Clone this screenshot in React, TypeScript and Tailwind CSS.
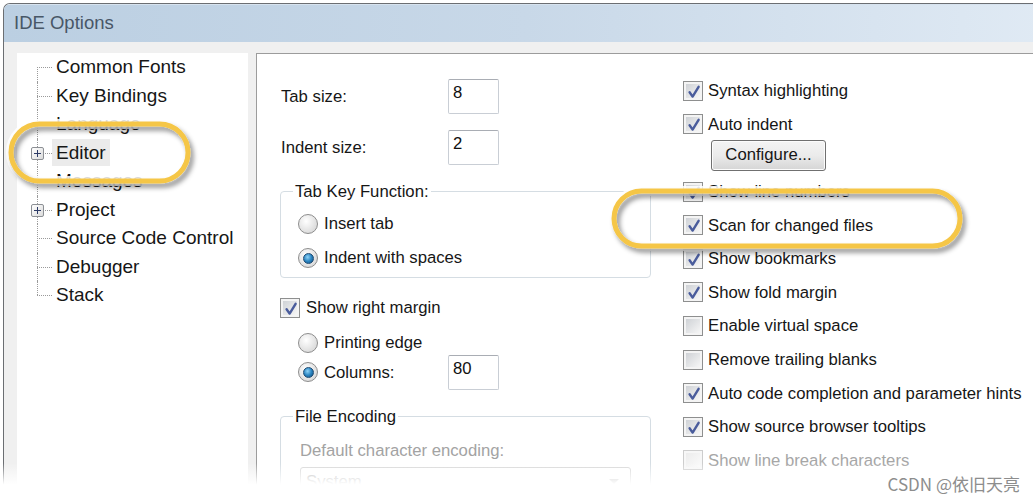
import React from "react";

const CheckMark = () => (
  <svg viewBox="0 0 20 20" className="absolute inset-0 w-[20px] h-[20px]">
    <path d="M5.6 10.2 L8.6 14.6 L14.6 4.8" fill="none" stroke="#4a5c9c" strokeWidth="2.4" strokeLinecap="round" strokeLinejoin="round" />
  </svg>
);

function Check({ checked, disabled }: { checked?: boolean; disabled?: boolean }) {
  return (
    <span
      className={
        disabled
          ? "relative w-[20px] h-[20px] shrink-0 border border-[#cdcdcd] bg-[#f7f7f7] p-[2px]"
          : "relative w-[20px] h-[20px] shrink-0 border border-[#8e8f8f] bg-[#f4f4f4] p-[2px]"
      }
    >
      <span
        className={
          disabled
            ? "block w-full h-full bg-linear-to-br from-[#ececec] to-[#fafafa]"
            : "block w-full h-full bg-linear-to-br from-[#cfd2d6] to-[#f6f6f6]"
        }
      />
      {checked && <CheckMark />}
    </span>
  );
}

function Radio({ selected }: { selected?: boolean }) {
  return (
    <span className="w-[20px] h-[20px] shrink-0 rounded-full border border-[#8d8d8d] bg-radial-[at_40%_35%] from-[#ffffff] to-[#cfcfcf] flex items-center justify-center">
      {selected && (
        <span className="w-[11px] h-[11px] rounded-full border border-[#1d4a72] bg-radial-[at_40%_35%] from-[#8fd3f7] via-[#2c86c2] to-[#0b4a7c]" />
      )}
    </span>
  );
}

function TextBox({ value }: { value: string }) {
  return (
    <div className="w-[51px] h-[35px] shrink-0 bg-white border border-[#c9ced5] border-t-[#a9adb4] rounded-[2px] pl-[4px] pt-[3px] leading-[20px] text-[#111]">
      {value}
    </div>
  );
}

function CheckRow({ label, checked, disabled }: { label: string; checked?: boolean; disabled?: boolean }) {
  return (
    <div className="h-[33.6px] shrink-0 flex items-center gap-[5px]">
      <Check checked={checked} disabled={disabled} />
      <span className={disabled ? "text-[#a6a6a6] whitespace-nowrap" : "whitespace-nowrap"}>{label}</span>
    </div>
  );
}

const treeItems: { label: string; plus?: boolean; selected?: boolean }[] = [
  { label: "Common Fonts" },
  { label: "Key Bindings" },
  { label: "Language" },
  { label: "Editor", plus: true, selected: true },
  { label: "Messages" },
  { label: "Project", plus: true },
  { label: "Source Code Control" },
  { label: "Debugger" },
  { label: "Stack" },
];

function TreeRow({ item, index, count }: { item: (typeof treeItems)[number]; index: number; count: number }) {
  const first = index === 0;
  const last = index === count - 1;
  const vClass = first
    ? "absolute left-[20px] top-1/2 bottom-0 border-l border-dotted border-[#9a9a9a]"
    : last
    ? "absolute left-[20px] top-0 bottom-1/2 border-l border-dotted border-[#9a9a9a]"
    : "absolute left-[20px] top-0 bottom-0 border-l border-dotted border-[#9a9a9a]";
  return (
    <div className="h-[28.5px] shrink-0 flex items-center">
      <div className="relative w-[35px] h-full shrink-0">
        <div className={vClass} />
        <div className="absolute left-[20px] w-[15px] top-1/2 border-t border-dotted border-[#9a9a9a]" />
        {item.plus && (
          <div className="absolute left-[14px] top-[8px] w-[13px] h-[13px] rounded-[2px] border border-[#8c8f94] bg-linear-to-br from-[#ffffff] to-[#dcdcdc] flex items-center justify-center">
            <div className="relative w-[7px] h-[7px]">
              <div className="absolute left-0 right-0 top-[3px] h-[1px] bg-[#2c3a66]" />
              <div className="absolute top-0 bottom-0 left-[3px] w-[1px] bg-[#2c3a66]" />
            </div>
          </div>
        )}
      </div>
      <span
        className={
          item.selected
            ? "h-[27px] flex items-center px-[4px] bg-[#ebebeb] whitespace-nowrap"
            : "h-[27px] flex items-center px-[4px] whitespace-nowrap"
        }
      >
        {item.label}
      </span>
    </div>
  );
}

export default function App() {
  return (
    <div className="relative w-[1033px] h-[499px] overflow-hidden bg-white pt-[3px] pl-[3px] font-['Liberation_Sans','Noto_Sans_CJK_SC',sans-serif]">
      <div className="w-[1045px] h-[496px] flex flex-col border-l border-t border-[#6b6e72] rounded-tl-[7px] overflow-hidden">
        {/* title bar */}
        <div className="h-[38px] shrink-0 bg-linear-to-r from-[#bbcfe2] via-[#c8d8e8] to-[#e0eaf4] flex items-center pl-[10px] border-t border-[#d7e3ef]">
          <span className="text-[18.5px] text-[#485767] leading-none">IDE Options</span>
        </div>
        {/* body */}
        <div className="flex-1 min-h-0 flex bg-[#f0f0f0] pt-[11px] pl-[13px]">
          {/* tree */}
          <div className="w-[231px] shrink-0 bg-white flex flex-col text-[19px] text-[#161616]">
            {treeItems.map((it, i) => (
              <TreeRow key={it.label} item={it} index={i} count={treeItems.length} />
            ))}
          </div>
          {/* right panel */}
          <div className="ml-[8px] flex-1 min-w-0 bg-white border-l border-t border-[#9c9c9c] flex pl-[23px] text-[16.7px] text-[#161616] overflow-hidden">
            {/* left column */}
            <div className="w-[371px] shrink-0 flex flex-col pt-[25px]">
              <div className="h-[35px] shrink-0 flex items-center">
                <span className="w-[168px] shrink-0 pl-[1px]">Tab size:</span>
                <TextBox value="8" />
              </div>
              <div className="h-[35px] shrink-0 mt-[16px] flex items-center">
                <span className="w-[168px] shrink-0 pl-[1px]">Indent size:</span>
                <TextBox value="2" />
              </div>
              <fieldset className="shrink-0 mt-[17px] border border-[#d5dde3] rounded-[4px] px-[17px] pb-[2px] min-w-0">
                <legend className="ml-[-5px] px-[2px] leading-[19px]">Tab Key Function:</legend>
                <div className="pt-[6px] flex flex-col">
                  <div className="h-[34px] shrink-0 flex items-center gap-[6px]">
                    <Radio />
                    <span>Insert tab</span>
                  </div>
                  <div className="h-[34px] shrink-0 flex items-center gap-[6px]">
                    <Radio selected />
                    <span>Indent with spaces</span>
                  </div>
                </div>
              </fieldset>
              <div className="shrink-0 mt-[13px] h-[34px] flex items-center gap-[6px]">
                <Check checked />
                <span>Show right margin</span>
              </div>
              <div className="shrink-0 mt-[3px] h-[30px] pl-[18px] flex items-center gap-[6px]">
                <Radio />
                <span>Printing edge</span>
              </div>
              <div className="shrink-0 mt-[-3px] h-[35px] flex items-center">
                <div className="w-[168px] shrink-0 pl-[18px] flex items-center gap-[6px]">
                  <Radio selected />
                  <span>Columns:</span>
                </div>
                <TextBox value="80" />
              </div>
              <fieldset className="shrink-0 mt-[17px] border border-[#d5dde3] rounded-[4px] px-[19px] min-w-0">
                <legend className="ml-[-7px] px-[2px] leading-[19px]">File Encoding</legend>
                <div className="pt-[10px] h-[40px] flex items-center text-[#a3a3a3]">Default character encoding:</div>
                <div className="mt-[1px] h-[30px] border border-[#d6d6d6] rounded-[3px] flex items-center justify-between px-[5px] text-[#b4b4b4]">
                  <span>System</span>
                  <svg width="10" height="6" viewBox="0 0 10 6" className="mr-[6px]">
                    <path d="M0 0 L10 0 L5 5 Z" fill="#b9b9b9" />
                  </svg>
                </div>
                <div className="h-[20px]" />
              </fieldset>
            </div>
            {/* right column */}
            <div className="ml-[32px] shrink-0 flex flex-col pt-[20px]">
              <CheckRow label="Syntax highlighting" checked />
              <CheckRow label="Auto indent" checked />
              <div className="h-[33.6px] shrink-0 flex items-start">
                <button className="ml-[28px] -mt-[1px] w-[115px] h-[31px] rounded-[3px] border border-[#707070] bg-linear-to-b from-[#f4f4f4] via-[#ebebeb] via-50% to-[#d5d5d5] shadow-[inset_0_0_0_1px_#fcfcfc] text-[#151515] text-[16.7px] leading-none">
                  Configure...
                </button>
              </div>
              <CheckRow label="Show line numbers" checked />
              <CheckRow label="Scan for changed files" checked />
              <CheckRow label="Show bookmarks" checked />
              <CheckRow label="Show fold margin" checked />
              <CheckRow label="Enable virtual space" />
              <CheckRow label="Remove trailing blanks" />
              <CheckRow label="Auto code completion and parameter hints" checked />
              <CheckRow label="Show source browser tooltips" checked />
              <CheckRow label="Show line break characters" disabled />
            </div>
          </div>
        </div>
      </div>

      {/* highlight ellipses */}
      <svg className="absolute inset-0 pointer-events-none" width="1033" height="499" viewBox="0 0 1033 499">
        <defs>
          <filter id="sh" x="-20%" y="-40%" width="140%" height="180%">
            <feDropShadow dx="3" dy="4" stdDeviation="2.5" floodColor="#000" floodOpacity="0.45" />
          </filter>
        </defs>
        <rect x="11" y="124" width="177" height="57" rx="28.5" fill="none" stroke="#ffffff" strokeOpacity="0.85" strokeWidth="10" />
        <rect x="11" y="124" width="177" height="57" rx="28.5" fill="none" stroke="#f5c646" strokeWidth="5" filter="url(#sh)" />
        <rect x="614" y="191" width="346" height="55" rx="27.5" fill="none" stroke="#ffffff" strokeOpacity="0.85" strokeWidth="10" />
        <rect x="614" y="191" width="346" height="55" rx="27.5" fill="none" stroke="#f5c646" strokeWidth="5" filter="url(#sh)" />
      </svg>

      {/* bottom fade */}
      <div className="absolute left-0 right-0 bottom-0 h-[36px] bg-linear-to-b from-white/0 via-white via-60% to-white pointer-events-none" />

      {/* watermark */}
      <div className="absolute right-[13px] bottom-[7px] text-[17px] text-[#8d8d8d] font-['Noto_Sans_CJK_SC','Liberation_Sans',sans-serif] leading-none">
        CSDN @依旧天亮
      </div>
    </div>
  );
}
